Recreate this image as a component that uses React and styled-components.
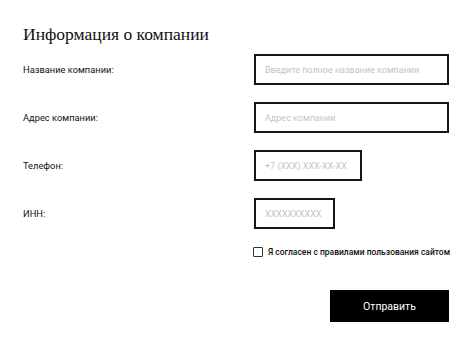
import React from 'react';
import styled, { createGlobalStyle } from 'styled-components';

const GlobalStyle = createGlobalStyle`
    body {
        margin: 0;
        background: #fff;
        font-family: Roboto, "Noto Sans", sans-serif;
        color: #111;
    }
`

const Form = styled.form`
    width: 426px;
    padding: 22px 25px 0 23px;
`

const Title = styled.h2`
    margin: 0 0 8px 0;
    font-family: "Liberation Serif", serif;
    font-weight: normal;
    font-size: 17.5px;
    line-height: 24px;
    color: #111;
`

const Fields = styled.div`
    display: flex;
    flex-direction: column;
    gap: 17px;
`

const Row = styled.label`
    display: grid;
    grid-template-columns: 231px 1fr;
    align-items: center;
`

const Label = styled.span`
    font-size: 9.3px;
    color: #111;
`

const Input = styled.input`
    box-sizing: border-box;
    width: ${props => props.w || 195}px;
    height: 31px;
    margin: 0;
    padding: 0 9px;
    border: 2px solid #151515;
    border-radius: 0;
    outline: none;
    background: #fff;
    font-family: Roboto, sans-serif;
    font-size: 9px;
    color: #111;

    &::placeholder {
        color: #c4c4c4;
    }
`

const Agree = styled.label`
    display: flex;
    align-items: center;
    gap: 5px;
    margin: 18px 0 0 230px;
    font-size: 8.5px;
    font-weight: 500;
    color: #111;
    white-space: nowrap;
`

const Check = styled.input`
    box-sizing: border-box;
    flex-shrink: 0;
    appearance: none;
    width: 10px;
    height: 10px;
    margin: 0;
    border: 1px solid #333;
    border-radius: 1px;
    background: #fff;
`

const Actions = styled.div`
    display: flex;
    justify-content: flex-end;
    margin-top: 33px;
`

const Submit = styled.button`
    width: 119px;
    height: 32px;
    border: none;
    border-radius: 0;
    background: #000;
    color: #fff;
    font-family: Roboto, sans-serif;
    font-size: 10.5px;
    cursor: pointer;
`

const fields = [
    { label: 'Название компании:', placeholder: 'Введите полное название компании', w: 195 },
    { label: 'Адрес компании:', placeholder: 'Адрес компании', w: 195 },
    { label: 'Телефон:', placeholder: '+7 (XXX) XXX-XX-XX', w: 108 },
    { label: 'ИНН:', placeholder: 'XXXXXXXXXX', w: 81 },
];

function App() {
    return (
        <>
            <GlobalStyle />
            <Form onSubmit={e => e.preventDefault()}>
                <Title>Информация о компании</Title>
                <Fields>
                    {fields.map(f => (
                        <Row key={f.label}>
                            <Label>{f.label}</Label>
                            <Input placeholder={f.placeholder} w={f.w} />
                        </Row>
                    ))}
                </Fields>
                <Agree>
                    <Check type="checkbox" />
                    Я согласен с правилами пользования сайтом
                </Agree>
                <Actions>
                    <Submit type="submit">Отправить</Submit>
                </Actions>
            </Form>
        </>
    );
}

export default App;
